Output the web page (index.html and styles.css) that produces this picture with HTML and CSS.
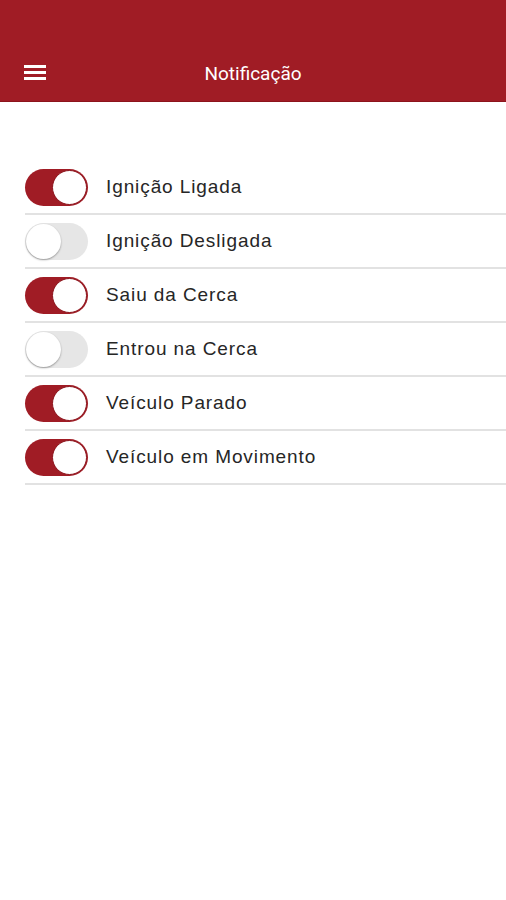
FILE: index.html
```html
<!DOCTYPE html>
<html lang="pt">
<head>
    <meta charset="UTF-8">
    <meta name="viewport" content="width=device-width, initial-scale=1.0">
    <title>Notificação</title>
    <link rel="stylesheet" href="styles.css">
</head>
<body>
    <header class="topbar">
        <span class="menu-icon">
            <svg width="22" height="16" viewBox="0 0 22 16">
                <rect x="0" y="1" width="22" height="3" fill="#fff"/>
                <rect x="0" y="7" width="22" height="3" fill="#fff"/>
                <rect x="0" y="13" width="22" height="3" fill="#fff"/>
            </svg>
        </span>
        <h1 class="title">Notificação</h1>
    </header>

    <ul class="options">
        <li class="option"><span class="switch on"></span><span class="label">Ignição Ligada</span></li>
        <li class="option"><span class="switch"></span><span class="label">Ignição Desligada</span></li>
        <li class="option"><span class="switch on"></span><span class="label">Saiu da Cerca</span></li>
        <li class="option"><span class="switch"></span><span class="label">Entrou na Cerca</span></li>
        <li class="option"><span class="switch on"></span><span class="label">Veículo Parado</span></li>
        <li class="option"><span class="switch on"></span><span class="label">Veículo em Movimento</span></li>
    </ul>
</body>
</html>
```

FILE: styles.css
```css
body {
    margin: 0;
    font-family: Roboto, "Noto Sans", sans-serif;
    background: #fff;
}
.topbar {
    position: relative;
    height: 101px;
    background-color: #a01c25;
    border-bottom: 1px solid #8c141c;
    display: flex;
    align-items: flex-end;
    justify-content: center;
}
.menu-icon {
    position: absolute;
    left: 24px;
    top: 64px;
    line-height: 0;
}
.title {
    margin: 0 0 16px;
    color: #fff;
    font-size: 19px;
    font-weight: 400;
    line-height: 22px;
}
.options {
    list-style: none;
    margin: 59px 0 0 25px;
    padding: 0;
}
.option {
    height: 52px;
    display: flex;
    align-items: center;
    border-bottom: 2px solid #e2e2e2;
}
.switch {
    position: relative;
    width: 63px;
    height: 37px;
    box-sizing: border-box;
    border-radius: 19px;
    background: #e6e6e6;
    margin-right: 18px;
    flex-shrink: 0;
}
.switch::after {
    content: "";
    position: absolute;
    left: 1px;
    top: 1px;
    width: 35px;
    height: 35px;
    border-radius: 50%;
    background: #fff;
    box-shadow: 0 1px 2px rgba(0, 0, 0, 0.35);
}
.switch.on {
    background: #a01c25;
}
.switch.on::after {
    left: 27px;
    box-shadow: none;
    border: 1px solid #8c141c;
    box-sizing: border-box;
}
.label {
    font-family: "Liberation Sans", Arial, sans-serif;
    font-size: 19px;
    letter-spacing: 0.9px;
    color: #262626;
}
```
